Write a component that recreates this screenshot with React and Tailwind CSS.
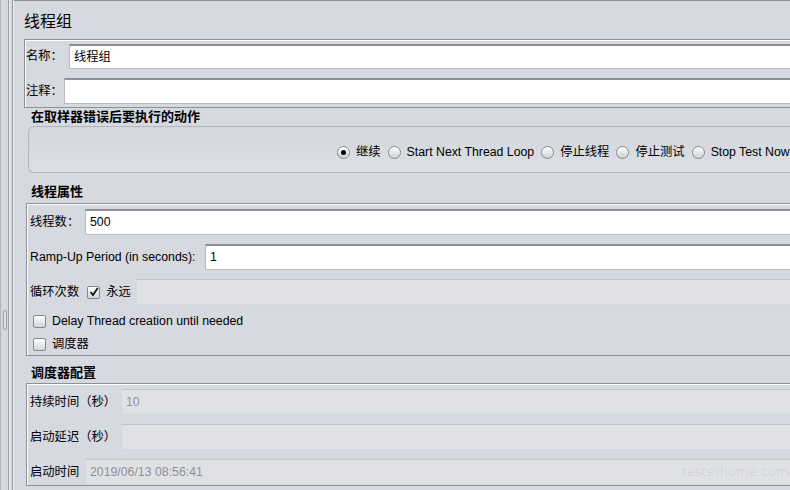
const FONT = "font-['Liberation_Sans','Noto_Sans_CJK_SC',sans-serif]";

function Field({ value = "", disabled = false, className = "" }) {
  return (
    <div
      className={`flex-1 flex items-center px-[4px] border ${
        disabled
          ? "bg-[#dfe1e5] border-[#d3d6db] border-t-[#c2c5ca] text-[#8f9196]"
          : "bg-white border-[#b9bbbf] border-t-[#8d8f94] border-t-2 text-black"
      } ${className}`}
    >
      {value}
    </div>
  );
}

function Radio({ checked, label }) {
  return (
    <div className="flex items-center gap-[6px] mr-[7px]">
      <span className="w-[13px] h-[13px] rounded-full border border-[#85888d] bg-gradient-to-b from-white to-[#cdd0d5] flex items-center justify-center shadow-[inset_0_1px_1px_#fff]">
        {checked && <span className="w-[5px] h-[5px] rounded-full bg-black" />}
      </span>
      <span>{label}</span>
    </div>
  );
}

function Check({ checked, label }) {
  return (
    <div className="flex items-center gap-[6px]">
      <span className="w-[13px] h-[13px] rounded-[2px] border border-[#85888d] bg-gradient-to-b from-white to-[#d2d5da] flex items-center justify-center">
        {checked && (
          <svg width="10" height="10" viewBox="0 0 10 10">
            <path d="M1.5 5 L4 8 L8.8 1" fill="none" stroke="#111" strokeWidth="1.8" />
          </svg>
        )}
      </span>
      <span>{label}</span>
    </div>
  );
}

function Box({ className = "", children }) {
  return (
    <div
      className={`border border-r-0 border-[#8e9097] shadow-[inset_1px_1px_0_#fff] flex flex-col ${className}`}
    >
      {children}
    </div>
  );
}

export default function App() {
  return (
    <div className={`w-[790px] h-[490px] overflow-hidden bg-[#d6d9df] flex relative text-[12.3px] text-black ${FONT}`}>
      {/* splitter gutter */}
      <div className="w-[14px] shrink-0 flex h-full">
        <div className="w-[1px] bg-[#b3b6bc]" />
        <div className="w-[7px] flex flex-col items-center pt-[310px]">
          <div className="w-[4px] h-[20px] rounded-[2px] border border-[#9a9da3] bg-[#e4e6ea] ml-[1px]" />
        </div>
        <div className="w-[1px] bg-[#999ca3]" />
        <div className="w-[1px] bg-[#eceef1]" />
        <div className="w-[2px]" />
        <div className="w-[1px] bg-[#999ca3]" />
        <div className="w-[1px] bg-[#eceef1]" />
      </div>

      {/* main panel */}
      <div className="w-[800px] shrink-0 flex flex-col border-t border-[#8f9299]">
        <div className="h-[38px] ml-[10px] flex items-center pt-[3px] text-[16px]">线程组</div>

        <Box className="ml-[10px] pt-[4px] pb-[3px]">
          <div className="flex h-[25px]">
            <div className="w-[44px] pl-[1px] flex items-center">名称：</div>
            <Field value="线程组" />
          </div>
          <div className="flex h-[26px] mt-[9px]">
            <div className="w-[39px] pl-[1px] flex items-center">注释：</div>
            <Field />
          </div>
        </Box>

        <div className="h-[18px] ml-[17px] flex items-center font-bold text-[13px]">在取样器错误后要执行的动作</div>

        <div className="ml-[14px] h-[47px] rounded-l-[6px] border border-r-0 border-[#b3b6bc] bg-gradient-to-b from-[#d3d6dc] to-[#dcdfe4] flex items-center pt-[5px] pl-[308px] whitespace-nowrap">
          <Radio checked label="继续" />
          <Radio label="Start Next Thread Loop" />
          <Radio label="停止线程" />
          <Radio label="停止测试" />
          <Radio label="Stop Test Now" />
        </div>

        <div className="h-[30px] ml-[17px] flex items-end pb-[2px] font-bold text-[13px]">线程属性</div>

        <Box className="ml-[12px] pt-[5px]">
          <div className="flex h-[26px]">
            <div className="w-[58px] pl-[3px] flex items-center">线程数：</div>
            <Field value="500" />
          </div>
          <div className="flex h-[26px] mt-[9px]">
            <div className="w-[178px] pl-[3px] flex items-center whitespace-nowrap">Ramp-Up Period (in seconds):</div>
            <Field value="1" />
          </div>
          <div className="flex h-[26px] mt-[9px]">
            <div className="w-[109px] pl-[3px] flex items-center gap-[8px] whitespace-nowrap">
              <span>循环次数</span>
              <Check checked label="永远" />
            </div>
            <Field disabled />
          </div>
          <div className="h-[22px] mt-[5px] pl-[6px] flex items-center">
            <Check label="Delay Thread creation until needed" />
          </div>
          <div className="h-[22px] mt-[1px] pl-[6px] flex items-center">
            <Check label="调度器" />
          </div>
        </Box>

        <div className="h-[27px] ml-[17px] flex items-end pb-[1px] font-bold text-[13px]">调度器配置</div>

        <Box className="ml-[12px] pt-[5px]">
          <div className="flex h-[26px]">
            <div className="w-[94px] pl-[3px] flex items-center">持续时间（秒）</div>
            <Field disabled value="10" />
          </div>
          <div className="flex h-[26px] mt-[9px]">
            <div className="w-[94px] pl-[3px] flex items-center">启动延迟（秒）</div>
            <Field disabled />
          </div>
          <div className="flex h-[26px] mt-[9px]">
            <div className="w-[58px] pl-[3px] flex items-center">启动时间</div>
            <Field disabled value="2019/06/13 08:56:41" />
          </div>
        </Box>
      </div>

      {/* watermark */}
      <div className="absolute left-[682px] top-[462px] text-[13px] text-[#caccd1] font-['DejaVu_Sans',sans-serif] font-light whitespace-nowrap">
        testerhome.com
      </div>
    </div>
  );
}
